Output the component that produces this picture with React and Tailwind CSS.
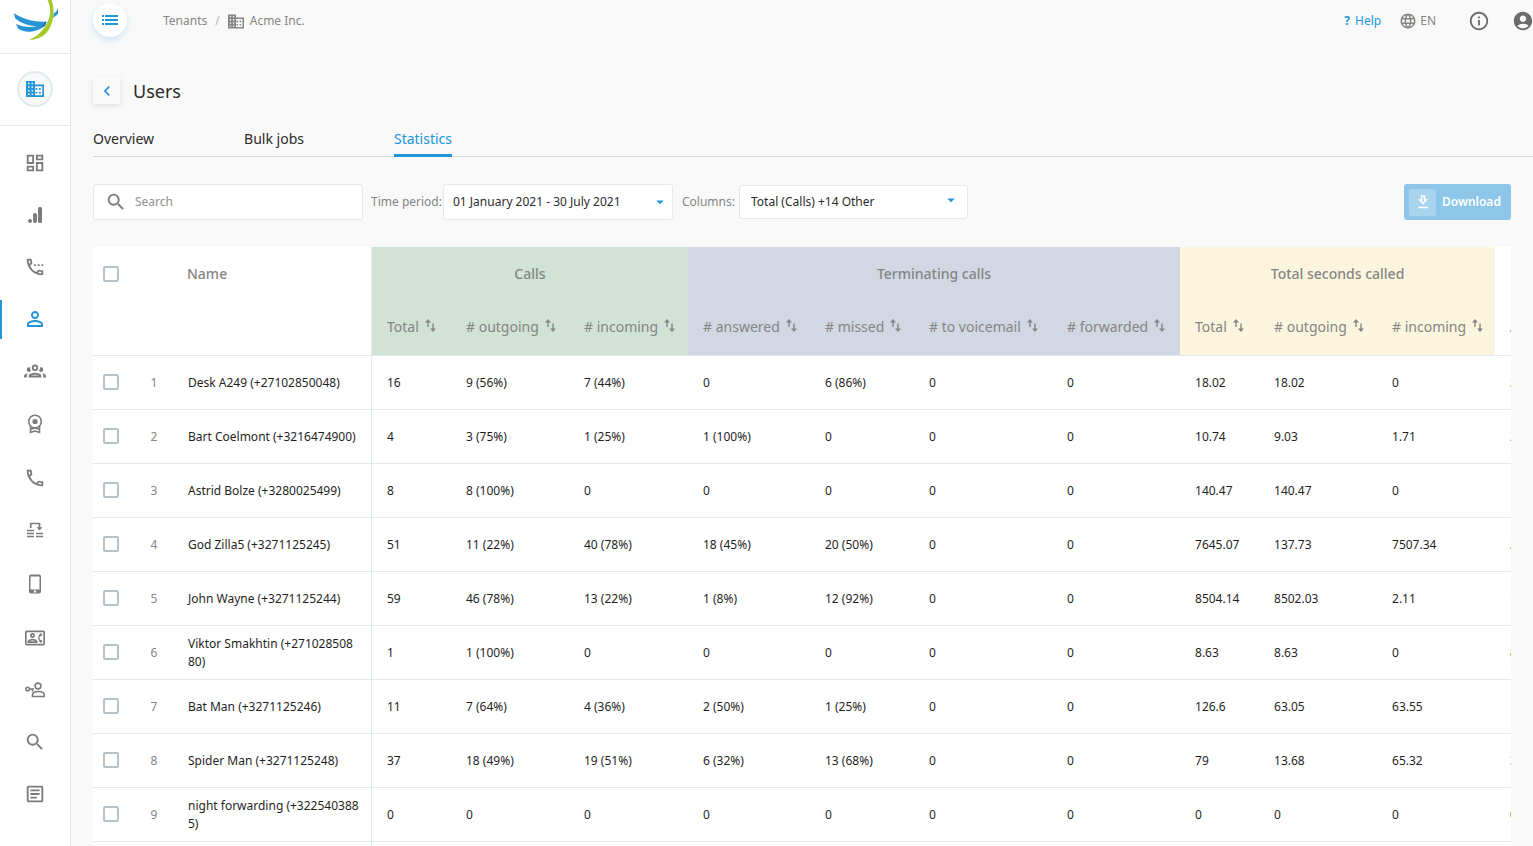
import React, { useState } from "react";
import {
  MdAccountCircle,
  MdArrowDropDown,
  MdChevronLeft,
  MdInfoOutline,
  MdLanguage,
  MdOutlineArticle,
  MdOutlineContactPhone,
  MdOutlineDashboard,
  MdOutlinePhone,
  MdOutlineSettingsPhone,
  MdPersonOutline,
  MdSearch,
} from "react-icons/md";

const groups = [
  { label: "Calls", span: 3, className: "bg-[#d0e3d4]" },
  { label: "Terminating calls", span: 4, className: "bg-[#d1d7e3]" },
  { label: "Total seconds called", span: 3, className: "bg-[#fcf5de]" },
];

const columns = [
  { label: "Total", className: "bg-[#d0e3d4]" },
  { label: "# outgoing", className: "bg-[#d0e3d4]" },
  { label: "# incoming", className: "bg-[#d0e3d4]" },
  { label: "# answered", className: "bg-[#d1d7e3]" },
  { label: "# missed", className: "bg-[#d1d7e3]" },
  { label: "# to voicemail", className: "bg-[#d1d7e3]" },
  { label: "# forwarded", className: "bg-[#d1d7e3]" },
  { label: "Total", className: "bg-[#fcf5de]" },
  { label: "# outgoing", className: "bg-[#fcf5de]" },
  { label: "# incoming", className: "bg-[#fcf5de]" },
  { label: "Average", className: "bg-white" },
];

const users = [
  { name: "Desk A249 (+27102850048)", stats: ["16", "9 (56%)", "7 (44%)", "0", "6 (86%)", "0", "0", "18.02", "18.02", "0", "2"] },
  { name: "Bart Coelmont (+3216474900)", stats: ["4", "3 (75%)", "1 (25%)", "1 (100%)", "0", "0", "0", "10.74", "9.03", "1.71", "2.69"] },
  { name: "Astrid Bolze (+3280025499)", stats: ["8", "8 (100%)", "0", "0", "0", "0", "0", "140.47", "140.47", "0", "17.56"] },
  { name: "God Zilla5 (+3271125245)", stats: ["51", "11 (22%)", "40 (78%)", "18 (45%)", "20 (50%)", "0", "0", "7645.07", "137.73", "7507.34", "263.62"] },
  { name: "John Wayne (+3271125244)", stats: ["59", "46 (78%)", "13 (22%)", "1 (8%)", "12 (92%)", "0", "0", "8504.14", "8502.03", "2.11", "180.94"] },
  { name: "Viktor Smakhtin (+27102850880)", stats: ["1", "1 (100%)", "0", "0", "0", "0", "0", "8.63", "8.63", "0", "8.63"] },
  { name: "Bat Man (+3271125246)", stats: ["11", "7 (64%)", "4 (36%)", "2 (50%)", "1 (25%)", "0", "0", "126.6", "63.05", "63.55", "14.07"] },
  { name: "Spider Man (+3271125248)", stats: ["37", "18 (49%)", "19 (51%)", "6 (32%)", "13 (68%)", "0", "0", "79", "13.68", "65.32", "3.29"] },
  { name: "night forwarding (+3225403885)", stats: ["0", "0", "0", "0", "0", "0", "0", "0", "0", "0", "0"] },
];

const Logo = () => (
  <svg width="46" height="42" viewBox="0 0 46 42" aria-hidden="true">
    <path d="M0 13C8 19 20 22.500 33 21.500L31 26C19 28 5 23 1 18Z" fill="#2694d6" />
    <path d="M2 24C11 28 21 28.500 32 23L28 28C20 33 9 32.500 4 28.500Z" fill="#2694d6" />
    <path d="M32 21L27 28L31 26Z" fill="#1b6d9f" />
    <path d="M44 8V14L39 18L40 13L42 12Z" fill="#2694d6" />
    <path d="M33.500 0C37.500 8 37 17 32 25C28 32 22 37 15 39.500C23 40.500 32 36 36 27.500C40 19 41 9 37.500 0Z" fill="#a5c928" />
  </svg>
);

const BuildingIcon = ({ className }) => (
  <svg className={className} viewBox="0 0 18 16" fill="currentColor" aria-hidden="true">
    <path
      fillRule="evenodd"
      d="M0 0H9V3.500H18V16H0ZM2 1.800V3.300H3.500V1.800ZM5.500 1.800V3.300H7V1.800ZM2 5.300V6.800H3.500V5.300ZM5.500 5.300V6.800H7V5.300ZM2 8.900V10.400H3.500V8.900ZM5.500 8.900V10.400H7V8.900ZM2 12.500V14H3.500V12.500ZM5.500 12.500V14H7V12.500ZM9 5.300V14.300H16.300V5.300Z"
    />
    <path d="M9.500 7H11.300V8.800H9.500ZM13 7H14.800V8.800H13ZM9.500 10.700H11.300V12.500H9.500ZM13 10.700H14.800V12.500H13Z" />
  </svg>
);

const SignalIcon = () => (
  <svg width="14" height="16" viewBox="0 0 14 16" fill="currentColor" aria-hidden="true">
    <circle cx="2" cy="14" r="2" />
    <rect x="5" y="6" width="4" height="10" rx="2" />
    <rect x="10" y="0" width="4" height="16" rx="1.500" />
  </svg>
);

const GroupIcon = () => (
  <svg width="22" height="22" viewBox="0 0 24 24" fill="currentColor" aria-hidden="true">
    <path d="M12,5A3.5,3.5 0 0,0 8.5,8.5A3.5,3.5 0 0,0 12,12A3.5,3.5 0 0,0 15.5,8.5A3.5,3.5 0 0,0 12,5M12,7A1.5,1.5 0 0,1 13.5,8.5A1.5,1.5 0 0,1 12,10A1.5,1.5 0 0,1 10.5,8.5A1.5,1.5 0 0,1 12,7M5.5,8A2.5,2.5 0 0,0 3,10.5C3,11.44 3.53,12.25 4.29,12.68C4.65,12.88 5.06,13 5.5,13C5.94,13 6.35,12.88 6.71,12.68C7.08,12.47 7.39,12.17 7.62,11.81C6.89,10.86 6.5,9.7 6.5,8.5C6.5,8.41 6.5,8.31 6.5,8.22C6.2,8.08 5.86,8 5.5,8M18.5,8C18.14,8 17.8,8.08 17.5,8.22C17.5,8.31 17.5,8.41 17.5,8.5C17.5,9.7 17.11,10.86 16.38,11.81C16.5,12 16.63,12.15 16.78,12.3C16.94,12.45 17.1,12.58 17.29,12.68C17.65,12.88 18.06,13 18.5,13C18.94,13 19.35,12.88 19.71,12.68C20.47,12.25 21,11.44 21,10.5A2.5,2.5 0 0,0 18.5,8M12,14C9.66,14 5,15.17 5,17.5V19H19V17.5C19,15.17 14.34,14 12,14M4.71,14.55C2.78,14.78 0,15.76 0,17.5V19H3V17.07C3,16.06 3.69,15.22 4.71,14.55M19.29,14.55C20.31,15.22 21,16.06 21,17.07V19H24V17.5C24,15.76 21.22,14.78 19.29,14.55M12,16C13.53,16 15.24,16.5 16.23,17H7.77C8.76,16.5 10.47,16 12,16Z" />
  </svg>
);

const AwardIcon = () => (
  <svg width="16" height="20" viewBox="0 0 16 20" fill="none" stroke="currentColor" strokeWidth="1.600" aria-hidden="true">
    <circle cx="8" cy="7.500" r="6.300" />
    <circle cx="8" cy="7.500" r="2.600" fill="currentColor" stroke="none" />
    <path d="M3.500 12V18.500L8 17L12.500 18.500V12M3.500 15.200L8 14L12.500 15.200" />
  </svg>
);

const QueueIcon = () => (
  <svg width="16" height="16" viewBox="0 0 16 16" fill="none" stroke="currentColor" strokeWidth="1.700" aria-hidden="true">
    <path d="M3.700 6V1.500H12.500V6M0 8.500H7M0 11.500H7M0 14.500H7M9 11.500H16M9 14.500H16" />
    <path d="M9.500 5.300H15.500L12.500 8.500Z" fill="currentColor" stroke="none" />
  </svg>
);

const MobileIcon = () => (
  <svg width="12" height="20" viewBox="0 0 12 20" fill="currentColor" aria-hidden="true">
    <path
      fillRule="evenodd"
      d="M2 0.500H10A2 2 0 0 1 12 2.500V17.500A2 2 0 0 1 10 19.500H2A2 2 0 0 1 0 17.500V2.500A2 2 0 0 1 2 0.500ZM1.500 2.500V15.500H10.500V2.500ZM4.900 16.500V18.500H7.100V16.500Z"
    />
  </svg>
);

const KeyUserIcon = () => (
  <svg width="20" height="16" viewBox="0 0 20 16" fill="none" stroke="currentColor" strokeWidth="1.600" aria-hidden="true">
    <circle cx="2.600" cy="7" r="1.800" />
    <path d="M4.400 7H9M7.500 7V9.500" />
    <circle cx="13" cy="4" r="2.900" />
    <path d="M7.500 14.500V13C7.500 10.500 10.500 9.500 13.300 9.500S19.200 10.500 19.200 13V14.500Z" />
  </svg>
);

const ListIcon = () => (
  <svg width="16" height="10" viewBox="0 0 16 10" fill="currentColor" aria-hidden="true">
    <path d="M0 0H2V2H0ZM3 0H16V2H3ZM0 4H2V6H0ZM3 4H16V6H3ZM0 8H2V10H0ZM3 8H16V10H3Z" />
  </svg>
);

const DownloadIcon = () => (
  <svg width="12" height="14" viewBox="0 0 12 14" fill="none" stroke="currentColor" strokeWidth="1.500" aria-hidden="true">
    <path d="M4.500 1H7.500V5H9.300L6 8.500L2.700 5H4.500ZM1 12.500H11" />
  </svg>
);

const SortIcon = () => (
  <svg width="11" height="13" viewBox="0 0 11 13" className="mb-1" fill="currentColor" aria-hidden="true">
    <path d="M3 0L6 3.500H3.700V8H2.300V3.500H0ZM7.300 4.500H8.700V9.500H11L8 13L5 9.500H7.300Z" />
  </svg>
);

const navItems = [
  { label: "Dashboard", icon: <MdOutlineDashboard size={22} />, height: "h-[52px]" },
  { label: "Analytics", icon: <SignalIcon />, height: "h-[52px]" },
  { label: "Call settings", icon: <MdOutlineSettingsPhone size={22} />, height: "h-[52px]" },
  { label: "Users", icon: <MdPersonOutline size={24} />, height: "h-[52px]", active: true },
  { label: "Groups", icon: <GroupIcon />, height: "h-[52px]" },
  { label: "Licenses", icon: <AwardIcon />, height: "h-[54px]" },
  { label: "Phone", icon: <MdOutlinePhone size={22} />, height: "h-[53px]" },
  { label: "Queues", icon: <QueueIcon />, height: "h-[52px]" },
  { label: "Devices", icon: <MobileIcon />, height: "h-[56px]" },
  { label: "Contacts", icon: <MdOutlineContactPhone size={20} />, height: "h-[52px]" },
  { label: "Permissions", icon: <KeyUserIcon />, height: "h-[52px]" },
  { label: "Search", icon: <MdSearch size={22} />, height: "h-[52px]" },
  { label: "Logs", icon: <MdOutlineArticle size={22} />, height: "h-[52px]" },
];

const Sidebar = () => (
  <aside className="w-[71px] shrink-0 border-r border-[#e3eaee] bg-white">
    <div className="flex h-[54px] items-start border-b border-[#e3eaee] pl-[14px]">
      <Logo />
    </div>
    <div className="flex h-[72px] items-start justify-center border-b border-[#e3eaee] pt-[17px]">
      <button
        type="button"
        aria-label="Tenant"
        className="flex h-9 w-9 items-center justify-center rounded-full border-2 border-[#e3eaee] bg-[#f9f9f9] text-[#2196d6]"
      >
        <BuildingIcon className="h-4 w-[18px]" />
      </button>
    </div>
    <nav className="pt-[11px]">
      {navItems.map((item) => (
        <a
          key={item.label}
          href="#"
          aria-label={item.label}
          className={`relative flex items-center justify-center ${item.height} ${
            item.active ? "text-[#2196d6]" : "text-[#7b7b7b]"
          }`}
        >
          {item.active && <span className="absolute left-0 h-[39px] w-0.5 bg-[#2196d6]" />}
          {item.icon}
        </a>
      ))}
    </nav>
  </aside>
);

const TopBar = () => (
  <header className="flex h-10 items-center pl-[22px] text-xs text-[#858585]">
    <button
      type="button"
      aria-label="Toggle menu"
      className="flex h-[34px] w-[34px] items-center justify-center rounded-full bg-white text-[#2196d6] shadow-[0_3px_6px_rgba(33,150,214,0.2)]"
    >
      <ListIcon />
    </button>
    <nav className="ml-9 flex items-center pt-0.5">
      <a href="#">Tenants</a>
      <span className="mx-2 text-[#b5b5b5]">/</span>
      <BuildingIcon className="h-[15px] w-4" />
      <a href="#" className="ml-[6px]">
        Acme Inc.
      </a>
    </nav>
    <div className="ml-auto flex items-center pt-0.5">
      <a href="#" className="flex items-center gap-[5px] text-[#2196d6]">
        <span className="font-bold">?</span>
        Help
      </a>
      <button type="button" className="ml-[18px] flex items-center gap-[3px]">
        <MdLanguage size={18} />
        EN
      </button>
      <button type="button" aria-label="Information" className="ml-8 text-[#6b6b6b]">
        <MdInfoOutline size={22} />
      </button>
      <button type="button" aria-label="Account" className="-mr-px ml-[22px] text-[#6b6b6b]">
        <MdAccountCircle size={22} />
      </button>
    </div>
  </header>
);

const Tabs = ({ active, onChange }) => (
  <div role="tablist" className="ml-[22px] mt-6 flex gap-[90px] border-b border-[#d6d8d9]">
    {["Overview", "Bulk jobs", "Statistics"].map((tab) => (
      <button
        key={tab}
        type="button"
        role="tab"
        aria-selected={active === tab}
        onClick={() => onChange(tab)}
        className={`-mb-px h-[29px] border-b-[3px] pb-1 text-sm leading-5 ${
          active === tab ? "border-[#2196d6] text-[#2196d6]" : "border-transparent text-[#2b2b2b]"
        }`}
      >
        {tab}
      </button>
    ))}
  </div>
);

const Checkbox = ({ label, checked, onChange }) => (
  <input
    type="checkbox"
    aria-label={label}
    checked={checked}
    onChange={onChange}
    className="block h-4 w-4 appearance-none rounded-[2px] border-2 border-[#b7c1c7] bg-white checked:bg-[#2196d6]"
  />
);

const UsersTable = () => {
  const [selected, setSelected] = useState([]);

  const toggle = (index) => {
    setSelected(
      selected.includes(index) ? selected.filter((i) => i !== index) : [...selected, index]
    );
  };

  const toggleAll = () => {
    setSelected(selected.length === users.length ? [] : users.map((_, index) => index));
  };

  return (
    <div className="mx-[22px] mt-[27px] overflow-hidden bg-white">
      <table className="w-[1517px] table-fixed border-separate border-spacing-0 text-left">
        <colgroup>
          <col className="w-[46px]" />
          <col className="w-[30px]" />
          <col className="w-[203px]" />
          <col className="w-[79px]" />
          <col className="w-[118px]" />
          <col className="w-[119px]" />
          <col className="w-[122px]" />
          <col className="w-[104px]" />
          <col className="w-[138px]" />
          <col className="w-[128px]" />
          <col className="w-[79px]" />
          <col className="w-[118px]" />
          <col className="w-[118px]" />
          <col className="w-[115px]" />
        </colgroup>
        <thead className="text-sm text-[#858585]">
          <tr className="h-[54px]">
            <th className="pl-[10px]">
              <Checkbox
                label="Select all users"
                checked={selected.length === users.length}
                onChange={toggleAll}
              />
            </th>
            <th />
            <th className="border-r border-[#e3eaee] pl-[18px] font-medium">Name</th>
            {groups.map((group) => (
              <th
                key={group.label}
                colSpan={group.span}
                className={`text-center font-medium ${group.className}`}
              >
                {group.label}
              </th>
            ))}
            <th />
          </tr>
          <tr className="h-[55px]">
            <th colSpan={3} className="border-b border-r border-[#e3eaee]" />
            {columns.map((column, index) => (
              <th
                key={index}
                className={`border-b border-[#e3eaee] pb-0.5 pl-[15px] font-normal ${column.className}`}
              >
                <button type="button" className="flex items-center gap-[6px] whitespace-nowrap">
                  {column.label}
                  <SortIcon />
                </button>
              </th>
            ))}
          </tr>
        </thead>
        <tbody className="text-xs text-[#1f1f1f]">
          {users.map((user, rowIndex) => (
            <tr key={user.name} className="h-[54px]">
              <td className="border-b border-[#e3eaee] pb-0.5 pl-[10px]">
                <Checkbox
                  label={`Select ${user.name}`}
                  checked={selected.includes(rowIndex)}
                  onChange={() => toggle(rowIndex)}
                />
              </td>
              <td className="border-b border-[#e3eaee] text-center text-[#858585]">
                {rowIndex + 1}
              </td>
              <td className="break-all border-b border-r border-[#e3eaee] pl-[19px] pr-3 leading-[18px]">
                {user.name}
              </td>
              {user.stats.map((value, index) => (
                <td key={index} className="border-b border-[#e3eaee] pl-[15px]">
                  {value}
                </td>
              ))}
            </tr>
          ))}
          <tr className="h-[54px]">
            <td colSpan={3} className="border-r border-[#e3eaee]" />
            <td colSpan={11} />
          </tr>
        </tbody>
      </table>
    </div>
  );
};

const App = () => {
  const [tab, setTab] = useState("Statistics");
  const [search, setSearch] = useState("");

  return (
    <div className="flex h-screen overflow-hidden bg-[#f9f9f9] font-['Noto_Sans',sans-serif]">
      <Sidebar />
      <main className="min-w-0 flex-1 overflow-hidden">
        <TopBar />
        <div className="ml-[22px] mt-[37px] flex items-center gap-[13px]">
          <button
            type="button"
            aria-label="Back"
            className="flex h-[27px] w-[27px] items-center justify-center text-[#2196d6] shadow-[0_2px_6px_rgba(0,0,0,0.1)]"
          >
            <MdChevronLeft size={20} />
          </button>
          <h1 className="text-lg leading-6 text-[#2b2b2b]">Users</h1>
        </div>
        <Tabs active={tab} onChange={setTab} />
        <div className="mx-[22px] mt-[27px] flex h-9 items-center text-xs text-[#858585]">
          <label className="flex h-9 w-[270px] items-center gap-2 rounded-[3px] border border-[#e3eaee] bg-white pl-[11px]">
            <MdSearch size={22} className="text-[#7b7b7b]" />
            <input
              type="text"
              aria-label="Search"
              placeholder="Search"
              value={search}
              onChange={(e) => setSearch(e.target.value)}
              className="min-w-0 flex-1 outline-none placeholder:text-[#8f8f8f]"
            />
          </label>
          <label htmlFor="period" className="ml-2 w-[72px] whitespace-nowrap">
            Time period:
          </label>
          <div className="relative">
            <select
              id="period"
              className="h-9 w-[230px] appearance-none rounded-[3px] border border-[#e3eaee] bg-white pl-[9px] text-[#2b2b2b]"
            >
              <option>01 January 2021 - 30 July 2021</option>
            </select>
            <MdArrowDropDown size={18} className="pointer-events-none absolute right-1 top-[9px] text-[#2196d6]" />
          </div>
          <label htmlFor="columns" className="ml-[9px] w-[57px] whitespace-nowrap">
            Columns:
          </label>
          <div className="relative">
            <select
              id="columns"
              className="h-[34px] w-[229px] appearance-none rounded-[3px] border border-[#e3eaee] bg-white pl-[11px] text-[#2b2b2b]"
            >
              <option>Total (Calls) +14 Other</option>
            </select>
            <MdArrowDropDown size={18} className="pointer-events-none absolute right-2 top-[6px] text-[#2196d6]" />
          </div>
          <button
            type="button"
            className="ml-auto flex h-9 w-[107px] items-center gap-[6px] rounded-[3px] bg-[#8dc6e8] pl-[5px] font-semibold text-white"
          >
            <span className="flex h-[27px] w-[27px] items-center justify-center rounded-[2px] bg-[#a9d4ed]">
              <DownloadIcon />
            </span>
            Download
          </button>
        </div>
        <UsersTable />
      </main>
    </div>
  );
};

export default App;
